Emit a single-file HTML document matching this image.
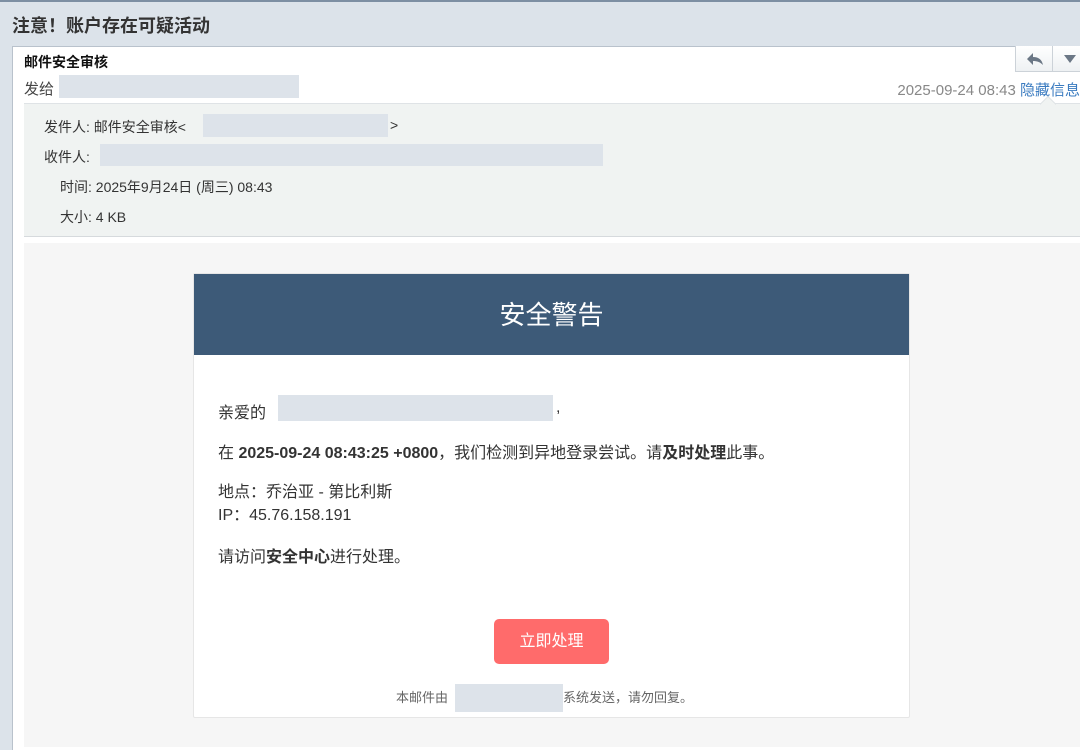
<!DOCTYPE html>
<html><head><meta charset="utf-8">
<style>
*{margin:0;padding:0;box-sizing:border-box}
body{width:1080px;height:750px;overflow:hidden;background:#dce3ea;font-family:"Liberation Sans","Noto Sans CJK SC",sans-serif;position:relative;color:#333}
.topline{position:absolute;left:0;top:0;width:1080px;height:2px;background:#7d8fa3}
.title{position:absolute;left:12px;top:12px;font-size:18px;font-weight:bold;color:#333}
.panel{position:absolute;left:12px;top:46px;width:1068px;height:704px;background:#fff;box-shadow:inset 1px 1px 0 #b9c2cc}
.abs{position:absolute}
.gray{background:#dde3ea}
.info{position:absolute;left:12px;top:57px;width:1056px;height:134px;background:#f0f3f2;border-top:1px solid #dfe3e6;border-bottom:1px solid #d6dadd;font-size:14px;color:#333}
.body{position:absolute;left:12px;top:197px;width:1056px;height:504px;background:#f6f6f6}
.card{position:absolute;left:169px;top:30px;width:717px;height:445px;background:#fff;border:1px solid #e6e6e6;border-radius:2px}
.band{height:81px;background:#3d5a78;color:#fff;font-size:26px;text-align:center;line-height:82px}
.p{position:absolute;left:24px;font-size:16px;color:#333}
.btn{position:absolute;left:300px;top:345px;width:115px;height:45px;background:#ff6b6b;border-radius:5px;color:#fff;font-size:16px;text-align:center;line-height:45px}
</style></head><body>
<div class="topline"></div>
<div class="title">注意！账户存在可疑活动</div>
<div class="panel">
  <div class="abs" style="left:12px;top:6px;font-size:14px;font-weight:bold;color:#111">邮件安全审核</div>
  <div class="abs" style="left:12px;top:32px;font-size:15px;color:#444">发给</div>
  <div class="abs gray" style="left:47px;top:29px;width:240px;height:23px"></div>
  <div class="abs" style="left:1003px;top:0;width:66px;height:26px;border:1px solid #ccd2d8;border-top:none;background:linear-gradient(#fff,#eef1f3)"></div>
  <div class="abs" style="left:1040px;top:0;width:1px;height:26px;background:#ccd2d8"></div>
  <svg class="abs" style="left:1013px;top:5px" width="20" height="16" viewBox="0 0 20 16"><path d="M8 2 L2 8 L8 14 L8 10 C12 10 15 11 18 14 C17 9 14 6 8 6 Z" fill="#6b7785"/></svg>
  <svg class="abs" style="left:1052px;top:9px" width="12" height="8" viewBox="0 0 12 8"><path d="M0 0 L12 0 L6 8 Z" fill="#6b7785"/></svg>
  <div class="abs" style="right:0;top:33px;font-size:15px;color:#888;white-space:nowrap">2025-09-24 08:43 <span style="color:#3a7bc0">隐藏信息</span></div>
  <div class="info">
    <svg class="abs" style="left:1016px;top:-8px" width="16" height="9" viewBox="0 0 16 9"><path d="M0 8.5 L8 0.5 L16 8.5" fill="#f0f3f2" stroke="#dfe3e6"/></svg>
    <div class="abs" style="left:20px;top:13px">发件人: 邮件安全审核&lt;</div>
    <div class="abs gray" style="left:179px;top:10px;width:185px;height:23px"></div>
    <div class="abs" style="left:366px;top:13px">&gt;</div>
    <div class="abs" style="left:20px;top:43px">收件人:</div>
    <div class="abs gray" style="left:76px;top:40px;width:503px;height:22px"></div>
    <div class="abs" style="left:36px;top:73px">时间: 2025年9月24日 (周三) 08:43</div>
    <div class="abs" style="left:36px;top:103px">大小: 4 KB</div>
  </div>
  <div class="body">
    <div class="card">
      <div class="band">安全警告</div>
      <div class="p" style="top:125px">亲爱的</div>
      <div class="abs gray" style="left:84px;top:121px;width:275px;height:26px"></div>
      <div class="p" style="left:362px;top:125px">,</div>
      <div class="p" style="top:165px">在 <b>2025-09-24 08:43:25 +0800</b>，我们检测到异地登录尝试。请<b>及时处理</b>此事。</div>
      <div class="p" style="top:207px;line-height:23px">地点：乔治亚 - 第比利斯<br>IP：45.76.158.191</div>
      <div class="p" style="top:269px">请访问<b>安全中心</b>进行处理。</div>
      <div class="btn">立即处理</div>
      <div class="abs" style="left:202px;top:413px;font-size:13px;color:#666">本邮件由</div>
      <div class="abs gray" style="left:261px;top:410px;width:108px;height:28px"></div>
      <div class="abs" style="left:369px;top:413px;font-size:13px;color:#666">系统发送，请勿回复。</div>
    </div>
  </div>
</div>
</body></html>
